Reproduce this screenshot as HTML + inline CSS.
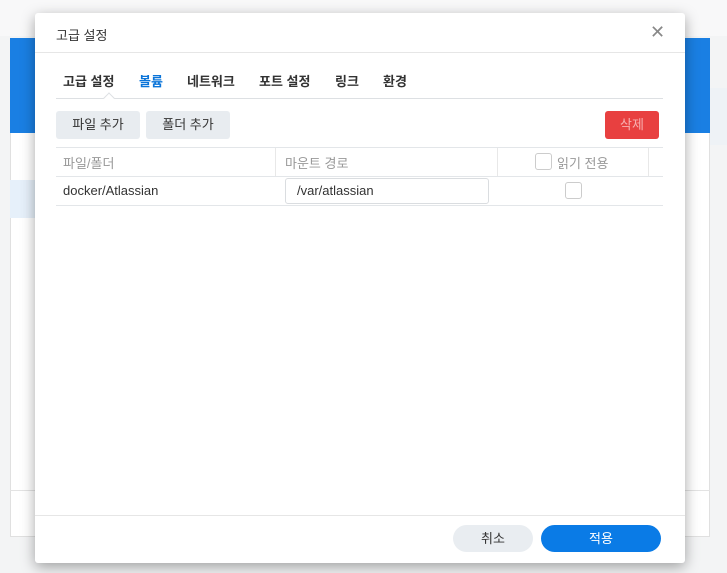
<!DOCTYPE html>
<html><head><meta charset="utf-8"><style>
*{box-sizing:border-box;margin:0;padding:0}
body{width:727px;height:573px;overflow:hidden;background:#f3f4f5;font-family:"Liberation Sans","Noto Sans CJK KR",sans-serif;position:relative;color:#333}
.abs{position:absolute}
.dlg{left:35px;top:13px;width:650px;height:550px;background:#fff;border-radius:3px;box-shadow:0 4px 14px rgba(0,0,0,.35)}
.t{font-size:13px}
.btn{position:absolute;border-radius:3px;font-size:13px;text-align:center}
</style></head><body>
<div class="abs" style="left:0;top:0;width:727px;height:36px;background:#f8f8f9"></div>
<div class="abs" style="left:710px;top:88px;width:17px;height:57px;background:#eef2f6"></div>
<div class="abs" style="left:10px;top:38px;width:700px;height:499px;background:#fff;border:1px solid #e0e0e0"></div>
<div class="abs" style="left:10px;top:38px;width:700px;height:95px;background:#1a7fe3"></div>
<div class="abs" style="left:10px;top:180px;width:25px;height:38px;background:#e6f0fa"></div>
<div class="abs" style="left:10px;top:490px;width:700px;height:1px;background:#e3e3e3"></div>
<div class="abs dlg">
 <div class="abs t" style="left:21px;top:12px;color:#333">고급 설정</div>
 <div class="abs" style="left:615px;top:9px;font-size:18px;color:#888">✕</div>
 <div class="abs" style="left:0;top:39px;width:650px;height:1px;background:#e6e6e6"></div>
 <div class="abs t" style="left:28px;top:58px;font-weight:bold;color:#333;word-spacing:0">
  <span style="position:absolute;left:0;white-space:nowrap">고급 설정</span>
  <span style="position:absolute;left:76px;color:#0a74d9;white-space:nowrap">볼륨</span>
  <span style="position:absolute;left:124px;white-space:nowrap">네트워크</span>
  <span style="position:absolute;left:196px;white-space:nowrap">포트 설정</span>
  <span style="position:absolute;left:272px;white-space:nowrap">링크</span>
  <span style="position:absolute;left:320px;white-space:nowrap">환경</span>
 </div>
 <div class="abs" style="left:21px;top:85px;width:607px;height:1px;background:#dde0e3"></div>
 <div class="abs" style="left:70px;top:81px;width:8px;height:8px;background:#fff;border-left:1px solid #dde0e3;border-top:1px solid #dde0e3;transform:rotate(45deg)"></div>
 <div class="btn" style="left:21px;top:98px;width:84px;height:28px;line-height:28px;background:#e8ecf0">파일 추가</div>
 <div class="btn" style="left:111px;top:98px;width:84px;height:28px;line-height:28px;background:#e8ecf0">폴더 추가</div>
 <div class="btn" style="left:570px;top:98px;width:54px;height:28px;line-height:28px;background:#e84040;color:#f7b0b0">삭제</div>
 <div class="abs" style="left:21px;top:134px;width:607px;height:1px;background:#e3e6e9"></div>
 <div class="abs" style="left:21px;top:163px;width:607px;height:1px;background:#e3e6e9"></div>
 <div class="abs" style="left:21px;top:192px;width:607px;height:1px;background:#e3e6e9"></div>
 <div class="abs" style="left:240px;top:135px;width:1px;height:28px;background:#e8e8e8"></div>
 <div class="abs" style="left:462px;top:135px;width:1px;height:28px;background:#e8e8e8"></div>
 <div class="abs" style="left:613px;top:135px;width:1px;height:28px;background:#e8e8e8"></div>
 <div class="abs t" style="left:28px;top:140px;color:#999">파일/폴더</div>
 <div class="abs t" style="left:250px;top:140px;color:#999">마운트 경로</div>
 <div class="abs" style="left:500px;top:140px;width:17px;height:17px;border:1px solid #ccc;border-radius:3px"></div>
 <div class="abs t" style="left:522px;top:140px;color:#999">읽기 전용</div>
 <div class="abs t" style="left:28px;top:170px;color:#333">docker/Atlassian</div>
 <div class="abs" style="left:250px;top:165px;width:204px;height:26px;border:1px solid #dadde0;border-radius:3px"></div>
 <div class="abs t" style="left:262px;top:170px;color:#333">/var/atlassian</div>
 <div class="abs" style="left:530px;top:169px;width:17px;height:17px;border:1px solid #ccc;border-radius:3px"></div>
 <div class="abs" style="left:0;top:502px;width:650px;height:1px;background:#e6e6e6"></div>
 <div class="btn" style="left:418px;top:512px;width:80px;height:27px;line-height:27px;background:#e9edf1;border-radius:14px">취소</div>
 <div class="btn" style="left:506px;top:512px;width:120px;height:27px;line-height:27px;background:#0a7be6;color:#fff;border-radius:14px">적용</div>
</div>
</body></html>
